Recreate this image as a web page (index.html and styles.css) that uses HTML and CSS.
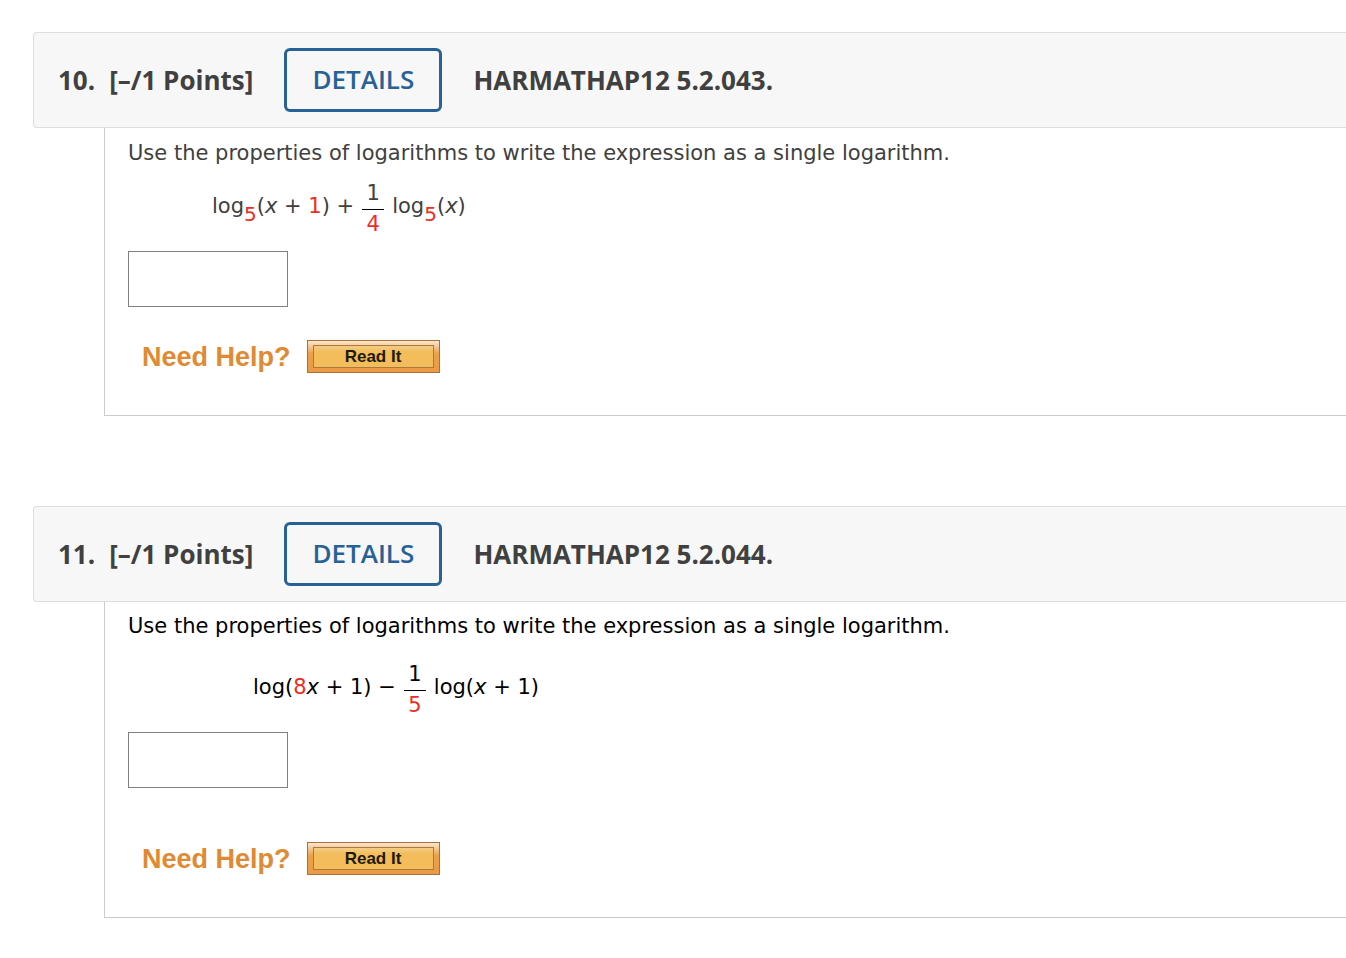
FILE: index.html
```html
<!DOCTYPE html>
<html lang="en">
<head>
  <meta charset="UTF-8" />
  <meta name="viewport" content="width=device-width, initial-scale=1.0"/>
  <title>Logarithm Properties</title>
  <link rel="stylesheet" href="styles.css">
</head>
<body>
  <main class="assignment">
    <section class="question">
      <header class="question-header">
        <h2 class="points"><span>10.</span><span>[–/1 Points]</span></h2>
        <button type="button" class="details">DETAILS</button>
        <strong class="source">HARMATHAP12 5.2.043.</strong>
      </header>
      <form class="question-body">
        <label class="prompt" for="answer10">Use the properties of logarithms to write the expression as a single logarithm.</label>
        <div class="expression">
          <span class="term">log<sub class="red">5</sub>(<i>x</i> + <span class="red">1</span>) +</span>
          <span class="fraction"><span class="top">1</span><span class="red">4</span></span>
          <span class="term">log<sub class="red">5</sub>(<i>x</i>)</span>
        </div>
        <input type="text" class="answer" name="answer10" id="answer10">
        <div class="help">
          <span class="help-title">Need Help?</span>
          <button type="button" class="read-it"><span>Read It</span></button>
        </div>
      </form>
    </section>

    <section class="question dark">
      <header class="question-header">
        <h2 class="points"><span>11.</span><span>[–/1 Points]</span></h2>
        <button type="button" class="details">DETAILS</button>
        <strong class="source">HARMATHAP12 5.2.044.</strong>
      </header>
      <form class="question-body">
        <label class="prompt" for="answer11">Use the properties of logarithms to write the expression as a single logarithm.</label>
        <div class="expression indented">
          <span class="term">log(<span class="red">8</span><i>x</i> + 1) −</span>
          <span class="fraction"><span class="top">1</span><span class="red">5</span></span>
          <span class="term">log(<i>x</i> + 1)</span>
        </div>
        <input type="text" class="answer" name="answer11" id="answer11">
        <div class="help spaced">
          <span class="help-title">Need Help?</span>
          <button type="button" class="read-it"><span>Read It</span></button>
        </div>
      </form>
    </section>
  </main>
</body>
</html>
```

FILE: styles.css
```css
* { box-sizing: border-box; }
body { margin: 0; background: #fff; color: #404040; font: 21px/28px Verdana, "DejaVu Sans", sans-serif; }
.assignment { padding: 32px 0 40px 33px; display: flex; flex-direction: column; gap: 90px; }

.question-header { display: flex; align-items: center; gap: 31px; padding: 15px 24px; background: #f7f7f7; border: 1px solid #ddd; border-right: 0; border-radius: 4px 0 0 4px; font: bold 26px/36px "Open Sans", sans-serif; }
.points { display: flex; gap: 14px; margin: 0; font: inherit; }
.details { width: 158px; height: 64px; padding: 0 0 2px; background: transparent; color: #286195; border: 3px solid #286195; border-radius: 6px; font: 600 26px/36px "Open Sans", sans-serif; }
.source { font-weight: bold; }

.question-body { display: flex; flex-direction: column; align-items: flex-start; margin-left: 71px; padding: 11px 23px 42px; border-left: 1px solid #ccc; border-bottom: 1px solid #ccc; }
.dark .question-body { color: #000; padding-top: 10px; }

.expression { display: flex; align-items: center; gap: 8px; margin: 12px 0 13px 84px; }
.expression.indented { margin: 20px 0 13px 125px; }
.term { padding-bottom: 5px; }
.fraction { display: flex; flex-direction: column; align-items: center; width: 22px; }
.top { width: 100%; padding-bottom: 2px; text-align: center; border-bottom: 1px solid #000; }
.red { color: #ee2c24; }
sub { font-size: 20px; line-height: 0; vertical-align: -8px; }

.answer { width: 160px; height: 56px; padding: 8px; border: 1px solid #808080; font: inherit; }

.help { display: flex; align-items: center; gap: 16px; margin: 33px 0 0 14px; }
.help.spaced { margin-top: 54px; }
.help-title { color: #e08a33; font: bold 27px/32px "Liberation Sans", Arial, sans-serif; }
.read-it { width: 133px; height: 33px; padding: 4px 5px; background: linear-gradient(#fbe6cf, #eca04c 40%, #eb9a45); border: 1px solid #a9703a; font: bold 17px/21px "Liberation Sans", Arial, sans-serif; color: #1f1a08; }
.read-it span { display: block; background: linear-gradient(#f3cd85, #f2bd5a 30%); border: 1px solid #a97a3c; }
```
